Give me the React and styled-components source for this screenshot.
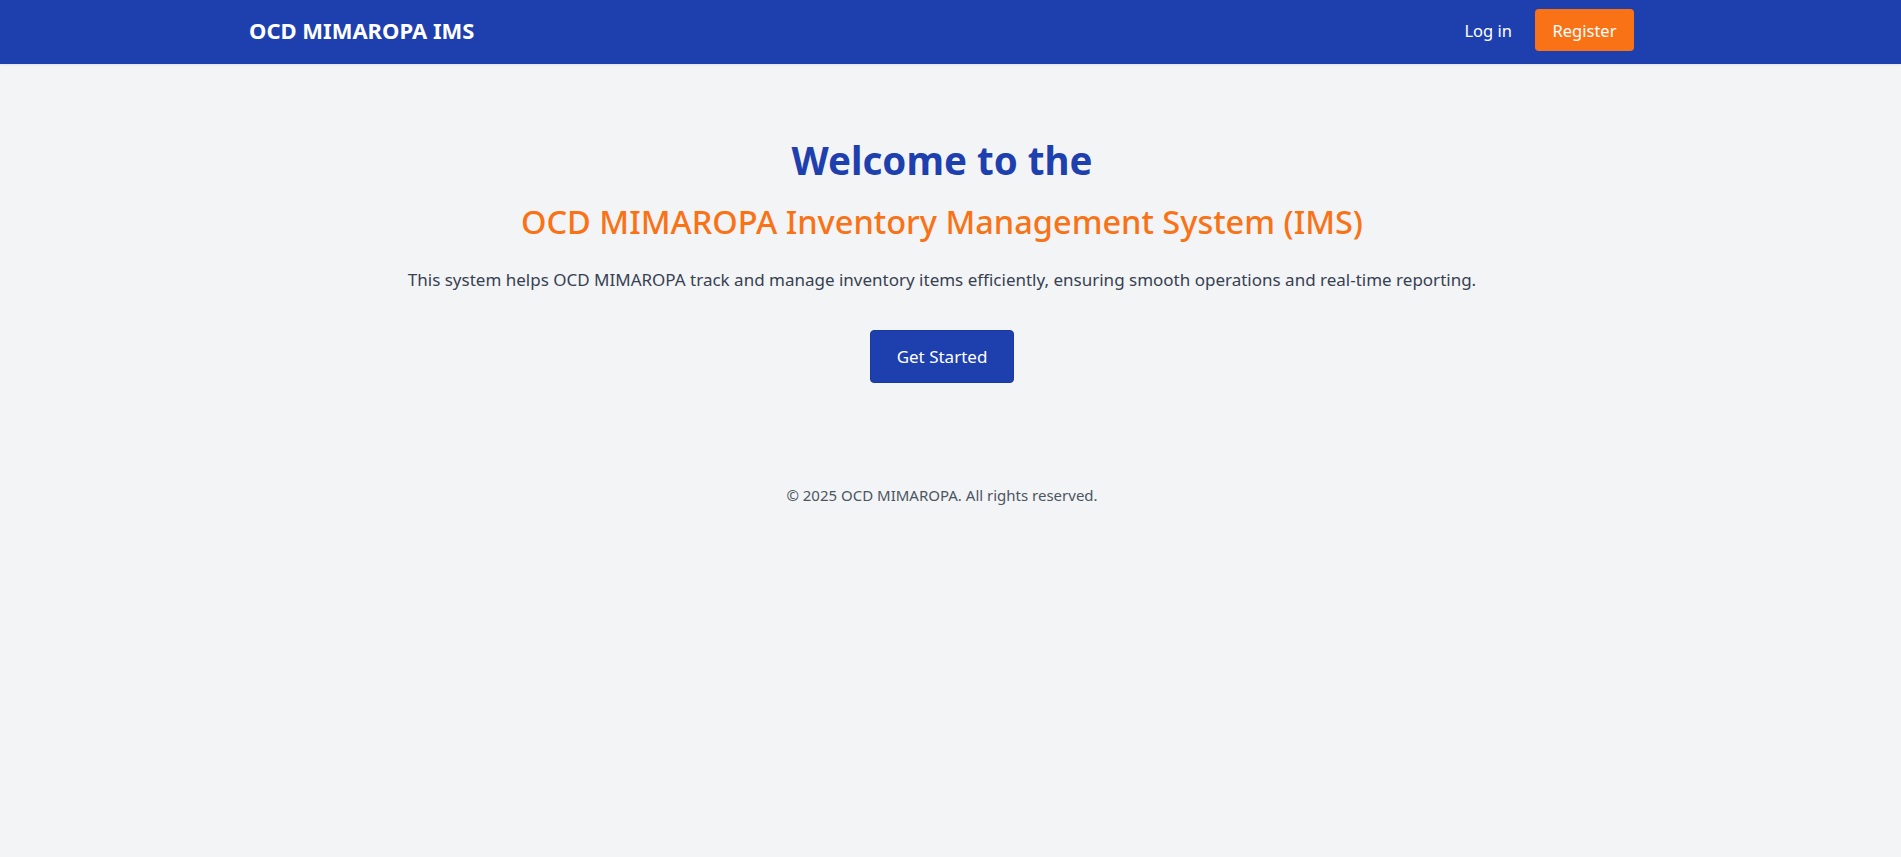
import React from 'react'
import styled, { createGlobalStyle } from 'styled-components'

const GlobalStyle = createGlobalStyle`
  html, body {
    margin: 0;
    padding: 0;
    background: #f3f4f6;
    font-family: "Noto Sans", "Open Sans", sans-serif;
  }
`

const Page = styled.div`
  min-height: 857px;
  background: #f3f4f6;
  padding-right: 17px;
`

const Header = styled.header`
  background: #1e40af;
  height: 64px;
  margin-right: -17px;
  box-shadow: 0 1px 2px rgba(0,0,0,.08);
`

const HeaderInner = styled.div`
  height: 100%;
  box-sizing: border-box;
  display: flex;
  align-items: center;
  justify-content: space-between;
  padding: 0 267px 4px 249px;
`

const Logo = styled.div`
  color: #fff;
  font-size: 22px;
  font-weight: 700;
`

const Nav = styled.nav`
  display: flex;
  align-items: center;
  gap: 23px;
`

const NavLink = styled.a`
  color: #fff;
  font-size: 16.5px;
  text-decoration: none;
`

const RegisterButton = styled.a`
  display: inline-flex;
  align-items: center;
  justify-content: center;
  height: 42px;
  width: 99px;
  box-sizing: border-box;
  border-radius: 4px;
  background: #f97316;
  color: #fff;
  font-size: 16.5px;
  text-decoration: none;
`

const Main = styled.main`
  display: flex;
  flex-direction: column;
  align-items: center;
  text-align: center;
  padding-top: 76px;
`

const Title = styled.h1`
  margin: 0;
  font-size: 38.5px;
  line-height: 40px;
  font-weight: 700;
  color: #1e40af;
`

const Subtitle = styled.h2`
  margin: 24px 0 0;
  font-size: 32.5px;
  line-height: 36px;
  font-weight: 500;
  color: #f97316;
`

const Lead = styled.p`
  margin: 26px 0 0;
  font-size: 17px;
  line-height: 28px;
  color: #374151;
`

const StartButton = styled.a`
  margin-top: 36px;
  display: inline-flex;
  align-items: center;
  justify-content: center;
  width: 144px;
  height: 53px;
  box-sizing: border-box;
  border-radius: 4px;
  border: 1px solid #1a3a9c;
  background: #1e40af;
  color: #fff;
  font-size: 17px;
  text-decoration: none;
`

const Footer = styled.footer`
  margin-top: 100px;
  text-align: center;
  font-size: 15px;
  line-height: 24px;
  color: #4b5563;
`

export default function App() {
  return (
    <Page>
      <GlobalStyle />
      <Header>
        <HeaderInner>
          <Logo>OCD MIMAROPA IMS</Logo>
          <Nav>
            <NavLink href="#">Log in</NavLink>
            <RegisterButton href="#">Register</RegisterButton>
          </Nav>
        </HeaderInner>
      </Header>
      <Main>
        <Title>Welcome to the</Title>
        <Subtitle>OCD MIMAROPA Inventory Management System (IMS)</Subtitle>
        <Lead>
          This system helps OCD MIMAROPA track and manage inventory items efficiently, ensuring smooth operations and real-time reporting.
        </Lead>
        <StartButton href="#">Get Started</StartButton>
      </Main>
      <Footer>© 2025 OCD MIMAROPA. All rights reserved.</Footer>
    </Page>
  )
}
